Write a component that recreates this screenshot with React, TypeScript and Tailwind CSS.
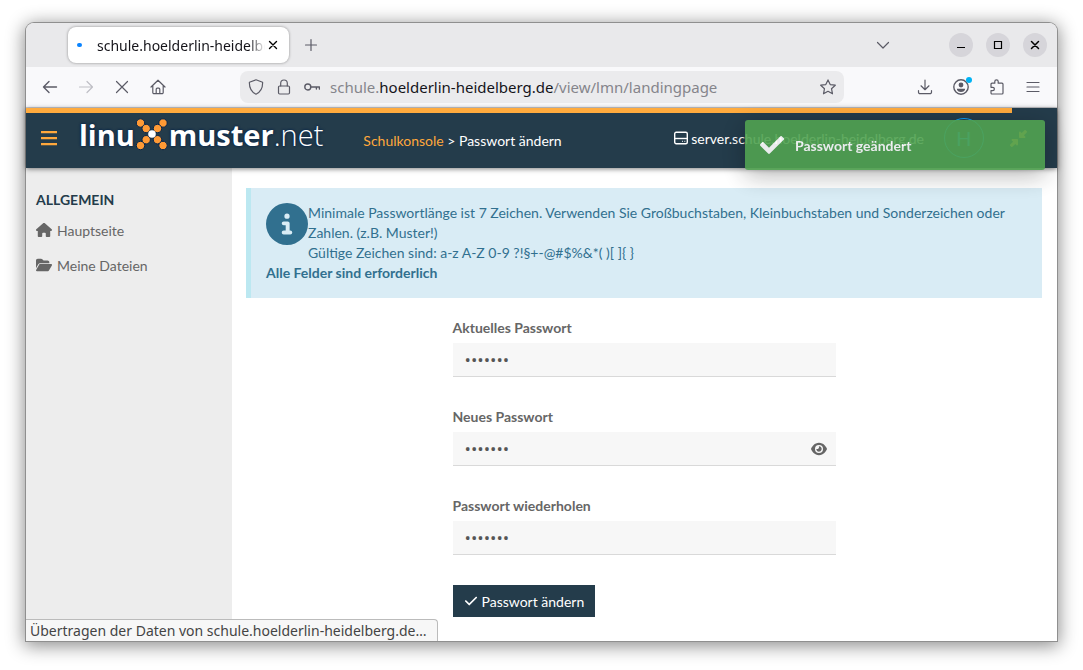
import React, { useState } from 'react'
import {
    FaCheck,
    FaCircleInfo,
    FaDownLeftAndUpRightToCenter,
    FaEye,
    FaFolderOpen,
    FaHouse,
} from 'react-icons/fa6'
import { FaCheck as FaCheckBold } from 'react-icons/fa'

type IconProps = { className?: string; children: React.ReactNode }

// thin line icon, 16px grid
const LineIcon = ({ className = 'size-4', children }: IconProps) => (
    <svg
        viewBox="0 0 16 16"
        className={className}
        fill="none"
        stroke="currentColor"
        strokeWidth="1.2"
        strokeLinecap="round"
        strokeLinejoin="round"
        aria-hidden="true"
    >
        {children}
    </svg>
)

const ToolButton = ({ label, disabled, children }: { label: string; disabled?: boolean; children: React.ReactNode }) => (
    <button
        aria-label={label}
        disabled={disabled}
        className="flex h-8 w-9 items-center justify-center text-[#5b5b66] disabled:text-[#bfbfc5]"
    >
        {children}
    </button>
)

const WindowButton = ({ label, children }: { label: string; children: React.ReactNode }) => (
    <button aria-label={label} className="flex size-6 items-center justify-center rounded-full bg-[#d6d5da] text-black">
        {children}
    </button>
)

const TabBar = () => (
    <div className="flex h-11 items-center bg-[#e9e9eb] pr-[10px] pl-[42px]">
        <div className="flex h-9 w-[221px] items-center rounded-lg bg-white pr-2 pl-[9px] shadow-[0_0_3px_rgba(0,0,0,0.4)]">
            <span className="h-1 w-[5px] rounded-full bg-[#0a84ff]" />
            <span className="ml-[15px] flex-1 overflow-hidden text-[14px] whitespace-nowrap text-[#15141a] [mask-image:linear-gradient(to_left,transparent,black_16px)]">
                schule.hoelderlin-heidelberg.de
            </span>
            <button aria-label="Tab schließen" className="flex size-4 items-center justify-center text-black">
                <LineIcon>
                    <path d="M4.5 4.5l7 7M11.5 4.5l-7 7" strokeWidth="1.4" />
                </LineIcon>
            </button>
        </div>
        <button aria-label="Neuer Tab" className="ml-[14px] text-[#5b5b66]">
            <LineIcon>
                <path d="M8 2.5v11M2.5 8h11" />
            </LineIcon>
        </button>
        <button aria-label="Tabs auflisten" className="mr-[58px] ml-auto text-[#5b5b66]">
            <LineIcon>
                <path d="M2.5 5.5L8 11l5.500-5.500" />
            </LineIcon>
        </button>
        <div className="flex gap-[13px]">
            <WindowButton label="Minimieren">
                <LineIcon><path d="M4 10.500h8" strokeLinecap="butt" /></LineIcon>
            </WindowButton>
            <WindowButton label="Maximieren">
                <LineIcon><path d="M4.500 4.500h7v7h-7z" strokeLinejoin="miter" /></LineIcon>
            </WindowButton>
            <WindowButton label="Schließen">
                <LineIcon><path d="M4.500 4.500l7 7M11.500 4.500l-7 7" strokeWidth="1.500" /></LineIcon>
            </WindowButton>
        </div>
    </div>
)

const Toolbar = () => (
    <div className="flex h-[41px] items-center border-b border-[#ccccd0] bg-[#f9f9fb] px-[6px]">
        <ToolButton label="Zurück">
            <LineIcon><path d="M14.500 8H1.500M7 2.500L1.500 8L7 13.500" strokeWidth="1.400" /></LineIcon>
        </ToolButton>
        <ToolButton label="Vor" disabled>
            <LineIcon><path d="M1.500 8h13M9 2.500L14.500 8L9 13.500" /></LineIcon>
        </ToolButton>
        <ToolButton label="Laden abbrechen">
            <LineIcon><path d="M2.500 2.500l11 11M13.500 2.500l-11 11" /></LineIcon>
        </ToolButton>
        <ToolButton label="Startseite">
            <LineIcon>
                <path d="M1 8l7-6.800L15 8M2.800 6.500V13.500a1.200 1.200 0 0 0 1.200 1.200h8a1.200 1.200 0 0 0 1.200-1.200V6.500M6.200 14.500V10.200a1 1 0 0 1 1-1h1.600a1 1 0 0 1 1 1V14.500" />
            </LineIcon>
        </ToolButton>

        <div className="mr-[63px] ml-16 flex h-8 flex-1 items-center rounded-lg bg-[#ebebed] px-2 text-[#5b5b66]">
            <LineIcon>
                <path d="M8 .800L14.600 3.200C14.800 8.500 12.500 13 8 15.200C3.500 13 1.200 8.500 1.400 3.200z" />
            </LineIcon>
            <LineIcon className="ml-3 size-4">
                <rect x="2.500" y="7" width="11" height="8" rx="1.200" />
                <path d="M4.700 7V4.300a3.300 3.300 0 0 1 6.600 0V7" />
            </LineIcon>
            <LineIcon className="ml-3 size-4">
                <circle cx="3.800" cy="8" r="3" strokeWidth="1.400" />
                <path d="M6.800 8H15.400V10M12.400 8v2" strokeWidth="1.400" />
            </LineIcon>
            <span className="ml-[10px] flex-1 text-[15px] whitespace-nowrap text-[#85858b]">
                schule.<span className="text-[#15141a]">hoelderlin-heidelberg.de</span>/view/lmn/landingpage
            </span>
            <button aria-label="Lesezeichen hinzufügen">
                <LineIcon>
                    <path d="M8 .900l2.200 4.700 5.100.600-3.800 3.500 1 5.100L8 12.300l-4.500 2.500 1-5.100L.700 6.200l5.100-.600z" />
                </LineIcon>
            </button>
        </div>

        <ToolButton label="Downloads">
            <LineIcon><path d="M8 1v9.500M4 6.800L8 10.700l4-3.900M1.500 11.500v1.700a1.500 1.500 0 0 0 1.500 1.500h10a1.500 1.500 0 0 0 1.500-1.500V11.500" /></LineIcon>
        </ToolButton>
        <ToolButton label="Konto">
            <span className="relative">
                <LineIcon>
                    <circle cx="8" cy="8" r="7.200" strokeWidth="1.400" />
                    <circle cx="8" cy="6" r="2.400" fill="currentColor" stroke="none" />
                    <path d="M3.800 9.700h8.400c0 2-2 3.300-4.200 3.300s-4.200-1.300-4.200-3.300z" fill="currentColor" stroke="none" />
                </LineIcon>
                <span className="absolute -top-[2px] -right-[3px] size-[6px] rounded-full bg-[#00b3f4]" />
            </span>
        </ToolButton>
        <ToolButton label="Erweiterungen">
            <LineIcon>
                <path d="M5.800 4.200V2.600a1.700 1.700 0 0 1 3.400 0V4.200H13a1 1 0 0 1 1 1V14a1 1 0 0 1-1 1H3a1 1 0 0 1-1-1V11.600h1.700a1.600 1.600 0 0 0 0-3.300H2V5.200a1 1 0 0 1 1-1z" />
            </LineIcon>
        </ToolButton>
        <ToolButton label="Menü">
            <LineIcon><path d="M2 3.500h12M2 8h12M2 12.500h12" /></LineIcon>
        </ToolButton>
    </div>
)

const logoDots = [
    [5.5, 6], [28, 6], [11.2, 11.5], [22.5, 11.5],
    [11.2, 22.7], [22.5, 22.7], [5.5, 28.5], [28, 28.5],
]

const Logo = () => (
    <a
        href="#"
        className="flex items-center font-['Open_Sans','Noto_Sans',sans-serif] leading-none text-white [text-shadow:0_0_2px_#06244a,0_0_3px_#06244a]"
    >
        <span className="text-[29px] font-bold">linu</span>
        <svg viewBox="0 0 34 34" className="size-[34px]" aria-hidden="true">
            <g fill="#ff9a35" stroke="#06244a">
                {logoDots.map(([x, y]) => (
                    <circle key={`${x}-${y}`} cx={x} cy={y} r="4.200" />
                ))}
            </g>
            <circle cx="17" cy="17" r="3.800" fill="#fff" />
        </svg>
        <span className="text-[29px] font-bold">muster</span>
        <span className="text-[29px] font-light">.net</span>
    </a>
)

const Header = () => (
    <header className="relative z-10 flex h-[60px] items-center bg-[#243c4b] pr-[30px] pl-[15px] text-[14px] text-white shadow-[0_1px_5px_rgba(0,0,0,0.5)]">
        <div className="absolute top-0 left-0 h-[5px] w-[95.6%] bg-[#ffab3e]" />
        <button aria-label="Navigation umschalten" className="text-[#ffa83c]">
            <svg viewBox="0 0 16 16" className="size-4" fill="currentColor" aria-hidden="true">
                <path d="M0 1h16v2.200H0zM0 7h16v2.200H0zM0 13h16v2.200H0z" />
            </svg>
        </button>
        <div className="ml-[22px] pb-2">
            <Logo />
        </div>
        <nav className="ml-10 pt-1 whitespace-nowrap">
            <a href="#" className="text-[#ffa83c]">Schulkonsole</a> &gt; <span>Passwort ändern</span>
        </nav>
        <div className="ml-auto flex items-center whitespace-nowrap">
            <svg viewBox="0 0 14 14" className="size-[14px]" fill="none" stroke="currentColor" strokeWidth="1.400" aria-hidden="true">
                <rect x=".700" y="1.200" width="12.600" height="11.600" rx="1.500" />
                <path d="M1 7.500h12" />
                <path d="M8 10.300h1M10.300 10.300h1" strokeWidth="1" />
            </svg>
            <span className="ml-[3px]">server.schule.hoelderlin-heidelberg.de</span>
            <button className="ml-5 flex size-10 items-center justify-center rounded-full border border-[#0a9cf5] text-[20px] text-[#0a9cf5]">
                H
            </button>
            <button aria-label="Verkleinern" className="ml-[26px] text-[#ffa83c]">
                <FaDownLeftAndUpRightToCenter className="size-[17px]" />
            </button>
        </div>
    </header>
)

const Sidebar = () => (
    <aside className="w-[206px] shrink-0 bg-[#ededed] px-[10px] pt-[22px] text-[14px] text-[#666]">
        <h2 className="leading-5 font-bold text-[#243c4b]">ALLGEMEIN</h2>
        <ul>
            <li>
                <a href="#" className="flex h-10 items-center gap-[5px]">
                    <FaHouse className="size-4" /> Hauptseite
                </a>
            </li>
            <li>
                <a href="#" className="flex h-[30px] items-center gap-[5px]">
                    <FaFolderOpen className="size-4" /> Meine Dateien
                </a>
            </li>
        </ul>
    </aside>
)

const InfoBox = () => (
    <div className="border-l-[5px] border-[#bce8f1] bg-[#d9ecf5] p-[15px] text-[14px] leading-5 text-[#31708f]">
        <FaCircleInfo className="float-left size-[42px]" />
        Minimale Passwortlänge ist 7 Zeichen. Verwenden Sie Großbuchstaben, Kleinbuchstaben und Sonderzeichen oder
        Zahlen. (z.B. Muster!)
        <br />
        Gültige Zeichen sind: a-z A-Z 0-9 ?!§+-@#$%&amp;*( )[ ]{'{ }'}
        <br />
        <b>Alle Felder sind erforderlich</b>
    </div>
)

const PasswordField = ({ id, label, reveal }: { id: string; label: string; reveal?: boolean }) => {
    const [visible, setVisible] = useState(false)

    return (
        <div>
            <label htmlFor={id} className="mb-[5px] block leading-5 font-bold">{label}</label>
            <div className="relative">
                <input
                    id={id}
                    type={visible ? 'text' : 'password'}
                    defaultValue="muster!"
                    className="block h-[34px] w-full border-b border-[#d9d9d9] bg-[#f7f7f7] px-3 font-['Open_Sans','Noto_Sans',sans-serif] text-[17px] text-[#555] outline-none"
                />
                {reveal && (
                    <button
                        type="button"
                        aria-label="Passwort anzeigen"
                        onClick={() => setVisible(prev => !prev)}
                        className="absolute top-[9px] right-[9px]"
                    >
                        <FaEye className="size-4" />
                    </button>
                )}
            </div>
        </div>
    )
}

const Toast = () => (
    <div
        role="status"
        className="absolute top-3 right-3 z-20 flex h-[50px] w-[300px] items-center rounded-[3px] bg-[#51a351] pl-[15px] text-[14px] font-bold text-white opacity-90 shadow-[0_6px_24px_rgba(0,0,0,0.3)]"
    >
        <FaCheckBold className="size-6" />
        <span className="ml-[11px]">Passwort geändert</span>
    </div>
)

const App = () => (
    <div className="flex min-h-screen bg-white px-[26px] pt-[23px] pb-[29px] font-['Noto_Sans','Open_Sans',sans-serif]">
        <div className="flex flex-1 flex-col rounded-t-lg shadow-[0_0_0_1px_#8f8f8f,0_3px_18px_2px_rgba(0,0,0,0.45)]">
            <div className="overflow-hidden rounded-t-lg">
                <TabBar />
                <Toolbar />
            </div>
            <div className="relative flex flex-1 flex-col font-[Lato,'Open_Sans',sans-serif]">
                <Header />
                <Toast />
                <div className="flex flex-1">
                    <Sidebar />
                    <main className="flex-1 bg-white pt-5 pr-[15px] pb-6 pl-[14px]">
                        <InfoBox />
                        <form
                            onSubmit={e => e.preventDefault()}
                            className="mx-auto mt-5 flex w-full max-w-[383px] flex-col gap-[30px] text-[14px] text-[#666]"
                        >
                            <PasswordField id="current" label="Aktuelles Passwort" />
                            <PasswordField id="new" label="Neues Passwort" reveal />
                            <PasswordField id="repeat" label="Passwort wiederholen" />
                            <button className="flex h-8 items-center gap-1 self-start bg-[#243c4b] px-[11px] text-white">
                                <FaCheck className="size-[14px]" /> Passwort ändern
                            </button>
                        </form>
                    </main>
                </div>
                <div className="absolute bottom-0 left-0 rounded-tr-[4px] border-t border-r border-[#bbb] bg-[#f7f7f7] pr-[10px] pl-1 font-['Noto_Sans','Open_Sans',sans-serif] text-[14px] leading-[21px] text-[#444]">
                    Übertragen der Daten von schule.hoelderlin-heidelberg.de…
                </div>
            </div>
        </div>
    </div>
)

export default App
